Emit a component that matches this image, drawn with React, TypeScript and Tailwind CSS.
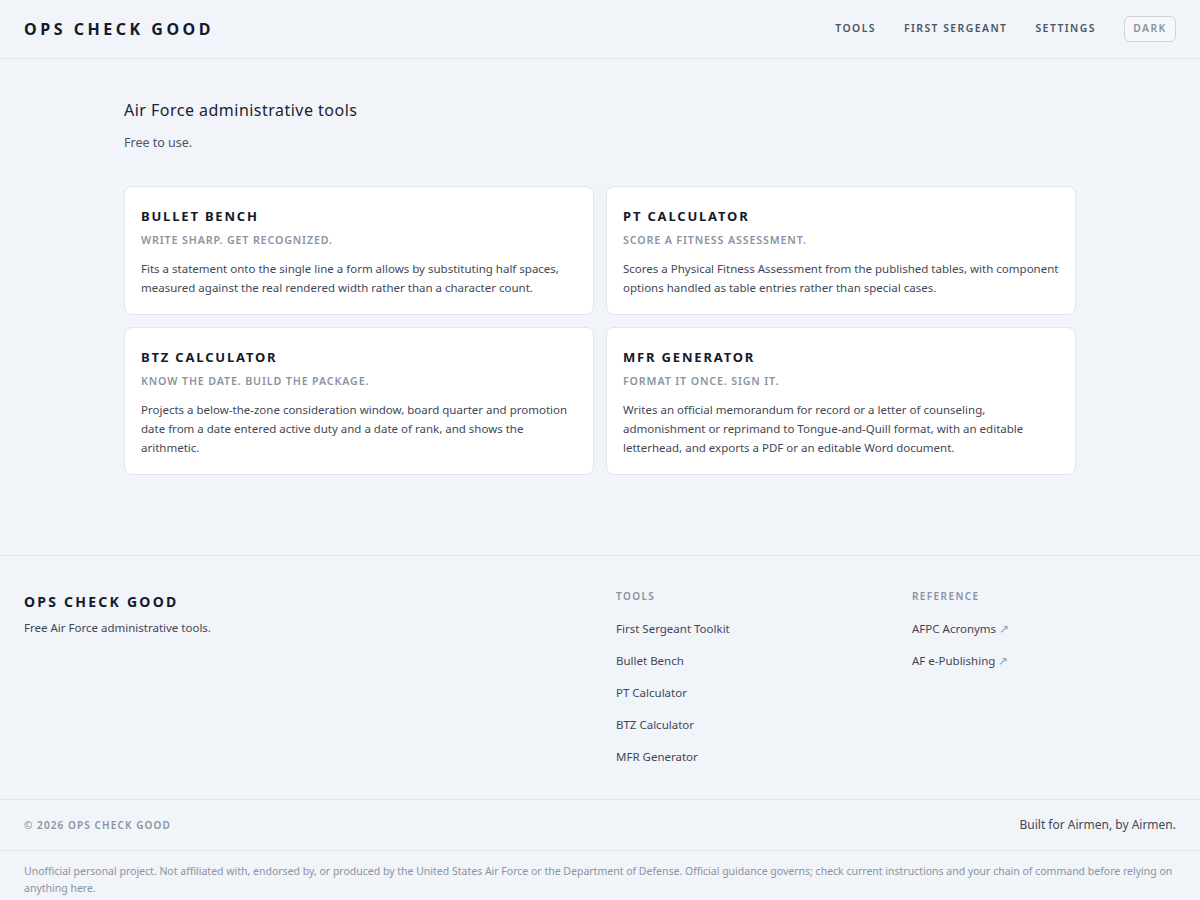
import React from 'react';

const tools = [
  {
    name: 'BULLET BENCH',
    tag: 'WRITE SHARP. GET RECOGNIZED.',
    body: 'Fits a statement onto the single line a form allows by substituting half spaces, measured against the real rendered width rather than a character count.',
  },
  {
    name: 'PT CALCULATOR',
    tag: 'SCORE A FITNESS ASSESSMENT.',
    body: 'Scores a Physical Fitness Assessment from the published tables, with component options handled as table entries rather than special cases.',
  },
  {
    name: 'BTZ CALCULATOR',
    tag: 'KNOW THE DATE. BUILD THE PACKAGE.',
    body: 'Projects a below-the-zone consideration window, board quarter and promotion date from a date entered active duty and a date of rank, and shows the arithmetic.',
  },
  {
    name: 'MFR GENERATOR',
    tag: 'FORMAT IT ONCE. SIGN IT.',
    body: 'Writes an official memorandum for record or a letter of counseling, admonishment or reprimand to Tongue-and-Quill format, with an editable letterhead, and exports a PDF or an editable Word document.',
  },
];

const footerTools = ['First Sergeant Toolkit', 'Bullet Bench', 'PT Calculator', 'BTZ Calculator', 'MFR Generator'];
const footerRefs = ['AFPC Acronyms', 'AF e-Publishing'];

export default function App() {
  return (
    <div className="min-h-screen bg-[#f1f4f9] text-[#0f172a] font-['Noto_Sans',sans-serif]">
      {/* Header */}
      <header className="h-[59px] border-b border-[#dfe4ec] px-6 flex items-center justify-between">
        <div className="text-[16px] font-bold tracking-[0.22em] text-[#131a2b]">OPS CHECK GOOD</div>
        <nav className="flex items-center gap-[28px] text-[10.4px] font-semibold tracking-[0.14em] text-[#4b5565]">
          <span>TOOLS</span>
          <span>FIRST SERGEANT</span>
          <span>SETTINGS</span>
          <span className="h-[26px] w-[52px] justify-center rounded-md border border-[#cfd5de] flex items-center text-[#8a93a2] bg-[#f6f8fb]">
            DARK
          </span>
        </nav>
      </header>

      {/* Main */}
      <main className="max-w-[952px] mx-auto pt-[39px] pb-[80px]">
        <h1 className="text-[16px] tracking-[0.03em] text-[#1b2233] leading-[24px]">Air Force administrative tools</h1>
        <p className="mt-[11px] text-[12.5px] text-[#4b5563] leading-[20px]">Free to use.</p>

        <div className="mt-[33px] grid grid-cols-2 gap-[12px]">
          {tools.map((t) => (
            <div key={t.name} className="bg-white border border-[#e1e6ee] rounded-lg px-4 pt-[19px] pb-[17px]">
              <div className="text-[13px] font-bold tracking-[0.14em] text-[#131a2b] leading-[20px]">{t.name}</div>
              <div className="mt-[6px] text-[10.7px] font-semibold tracking-[0.08em] text-[#8a93a2] leading-[16px]">{t.tag}</div>
              <p className="mt-[11px] text-[11.5px] leading-[19px] text-[#3f4756]">{t.body}</p>
            </div>
          ))}
        </div>
      </main>

      {/* Footer */}
      <footer className="border-t border-[#dfe4ec]">
        <div className="px-6 pt-[32px] pb-[33px] grid grid-cols-4 gap-8">
          <div className="col-span-2">
            <div className="text-[14px] font-bold tracking-[0.16em] text-[#131a2b] leading-[22px] mt-[3px]">OPS CHECK GOOD</div>
            <p className="mt-[6px] text-[11.5px] text-[#3f4756] leading-[18px]">Free Air Force administrative tools.</p>
          </div>
          <div>
            <div className="text-[10px] font-semibold tracking-[0.14em] text-[#8a93a2] leading-[16px]">TOOLS</div>
            <ul className="mt-[16px] flex flex-col gap-[14px]">
              {footerTools.map((l) => (
                <li key={l} className="text-[11.5px] text-[#3f4756] leading-[18px]">{l}</li>
              ))}
            </ul>
          </div>
          <div>
            <div className="text-[10px] font-semibold tracking-[0.14em] text-[#8a93a2] leading-[16px]">REFERENCE</div>
            <ul className="mt-[16px] flex flex-col gap-[14px]">
              {footerRefs.map((l) => (
                <li key={l} className="text-[11.5px] text-[#3f4756] leading-[18px]">
                  {l} <span className="text-[#9aa2ae]">↗</span>
                </li>
              ))}
            </ul>
          </div>
        </div>

        <div className="border-t border-[#dfe4ec] px-6 h-[51px] flex items-center justify-between">
          <span className="text-[10px] font-semibold tracking-[0.11em] text-[#8a93a2]">© 2026 OPS CHECK GOOD</span>
          <span className="text-[12px] text-[#3f4756]">Built for Airmen, by Airmen.</span>
        </div>

        <div className="border-t border-[#dfe4ec] px-6 pt-[12px] pb-[6px]">
          <p className="text-[10.5px] leading-[17px] text-[#8a93a2]">
            Unofficial personal project. Not affiliated with, endorsed by, or produced by the United States Air Force or the Department of Defense. Official guidance governs; check current instructions and your chain of command before relying on anything here.
          </p>
        </div>
      </footer>
    </div>
  );
}
